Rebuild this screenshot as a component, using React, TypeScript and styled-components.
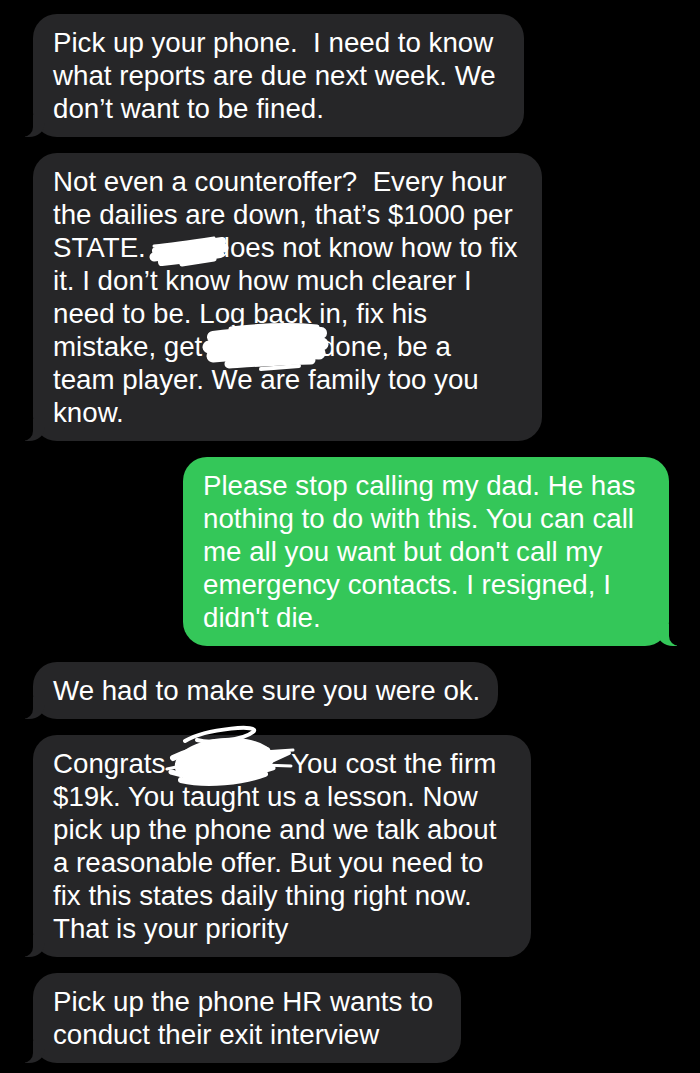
import React from "react";
import styled, { createGlobalStyle } from "styled-components";

const GlobalStyle = createGlobalStyle`
  html, body {
    margin: 0;
    padding: 0;
    background: #000;
  }
`;

const Thread = styled.div`
  display: flex;
  flex-direction: column;
  gap: 16px;
  padding: 14px 31px 10px 33px;
  min-height: 100vh;
  box-sizing: border-box;
  background: #000;
`;

const Bubble = styled.div<{ $sent?: boolean; $w: number }>`
  position: relative;
  align-self: ${(p) => (p.$sent ? "flex-end" : "flex-start")};
  width: ${(p) => p.$w}px;
  box-sizing: border-box;
  padding: 12px 20px;
  border-radius: 24px;
  background: ${(p) => (p.$sent ? "#34c759" : "#262628")};
  color: #fff;
  font-family: "Liberation Sans", Arial, sans-serif;
  font-size: 27.7px;
  line-height: 33px;
  white-space: pre;

  &::before {
    content: "";
    position: absolute;
    bottom: 0;
    width: 20px;
    height: 22px;
    background: inherit;
    ${(p) =>
      p.$sent
        ? "right: -8px; border-bottom-left-radius: 16px 14px;"
        : "left: -8px; border-bottom-right-radius: 16px 14px;"}
  }

  &::after {
    content: "";
    position: absolute;
    bottom: 0;
    width: 26px;
    height: 22px;
    background: #000;
    ${(p) =>
      p.$sent
        ? "right: -26px; border-bottom-left-radius: 10px;"
        : "left: -26px; border-bottom-right-radius: 10px;"}
  }
`;

const Redact = styled.span<{ $w: number }>`
  position: relative;
  display: inline-block;
  width: ${(p) => p.$w}px;
  height: 33px;
  vertical-align: top;
`;

const Scribble = styled.svg`
  position: absolute;
  z-index: 1;
  overflow: visible;
`;

// name scribbled out after "STATE."
const ScribbleA = () => (
  <Redact $w={61}>
    <Scribble
      style={{ left: -2, top: 5 }}
      width="74"
      height="30"
      viewBox="0 0 74 30"
      fill="none"
      stroke="#fff"
      strokeLinecap="round"
    >
      <path d="M2 10 C22 8 42 5 62 2" strokeWidth="3" />
      <path d="M4 15 C25 12 50 8 70 5" strokeWidth="8" />
      <path d="M2 21 C25 18 50 14 72 12" strokeWidth="9" />
      <path d="M10 26 C30 24 50 21 68 18" strokeWidth="8" />
      <path d="M30 28 L62 23" strokeWidth="5" />
    </Scribble>
  </Redact>
);

// words scribbled out after "get"
const ScribbleB = () => (
  <Redact $w={110}>
    <Scribble
      style={{ left: -5, top: -6 }}
      width="120"
      height="48"
      viewBox="0 0 120 48"
      fill="none"
      stroke="#fff"
      strokeLinecap="round"
    >
      <path d="M26 5 C60 1 90 1 112 3" strokeWidth="5" />
      <path d="M8 13 C40 9 86 7 116 9" strokeWidth="12" />
      <path d="M4 23 C40 19 86 17 117 20" strokeWidth="13" />
      <path d="M8 32 C40 29 86 27 114 29" strokeWidth="13" />
      <path d="M24 40 C56 38 86 36 106 36" strokeWidth="9" />
      <path d="M56 45 L94 42" strokeWidth="4" />
    </Scribble>
  </Redact>
);

// name scribbled out after "Congrats"
const ScribbleC = () => (
  <Redact $w={118}>
    <Scribble
      style={{ left: -6, top: -19 }}
      width="124"
      height="60"
      viewBox="0 0 124 60"
      fill="none"
      stroke="#fff"
      strokeLinecap="round"
      strokeLinejoin="round"
    >
      <path
        d="M10 36 C12 22 40 10 70 12 C96 14 108 24 104 34 C100 46 70 56 40 54 C20 52 8 46 10 36 Z"
        fill="#fff"
        strokeWidth="4"
      />
      <path d="M6 30 C30 18 64 14 100 22" strokeWidth="6" />
      <path d="M4 44 C30 52 70 52 106 40" strokeWidth="5" />
      <path d="M18 13 C40 0 96 -4 86 4 C76 12 44 16 30 12" strokeWidth="4" />
      <path d="M96 24 L122 25 L98 36 Z" fill="#fff" strokeWidth="4" />
      <path d="M96 24 L126 22" strokeWidth="3" />
      <path d="M96 37 L124 38" strokeWidth="3" />
      <path d="M0 41 L14 38" strokeWidth="3" />
      <path d="M14 52 C40 58 76 54 98 46" strokeWidth="6" />
    </Scribble>
  </Redact>
);

const App = () => (
  <>
    <GlobalStyle />
    <Thread>
      <Bubble $w={491}>
        {"Pick up your phone.  I need to know"}
        <br />
        {"what reports are due next week. We"}
        <br />
        {"don\u2019t want to be fined."}
      </Bubble>

      <Bubble $w={509}>
        {"Not even a counteroffer?  Every hour"}
        <br />
        {"the dailies are down, that\u2019s $1000 per"}
        <br />
        {"STATE. "}
        <ScribbleA />
        {"does not know how to fix"}
        <br />
        {"it. I don\u2019t know how much clearer I"}
        <br />
        {"need to be. Log back in, fix his"}
        <br />
        {"mistake, get "}
        <ScribbleB />
        {"done, be a"}
        <br />
        {"team player. We are family too you"}
        <br />
        {"know."}
      </Bubble>

      <Bubble $sent $w={486}>
        {"Please stop calling my dad. He has"}
        <br />
        {"nothing to do with this. You can call"}
        <br />
        {"me all you want but don't call my"}
        <br />
        {"emergency contacts. I resigned, I"}
        <br />
        {"didn't die."}
      </Bubble>

      <Bubble $w={465}>{"We had to make sure you were ok."}</Bubble>

      <Bubble $w={498}>
        {"Congrats "}
        <ScribbleC />
        {"You cost the firm"}
        <br />
        {"$19k. You taught us a lesson. Now"}
        <br />
        {"pick up the phone and we talk about"}
        <br />
        {"a reasonable offer. But you need to"}
        <br />
        {"fix this states daily thing right now."}
        <br />
        {"That is your priority"}
      </Bubble>

      <Bubble $w={428}>
        {"Pick up the phone HR wants to"}
        <br />
        {"conduct their exit interview"}
      </Bubble>
    </Thread>
  </>
);

export default App;
